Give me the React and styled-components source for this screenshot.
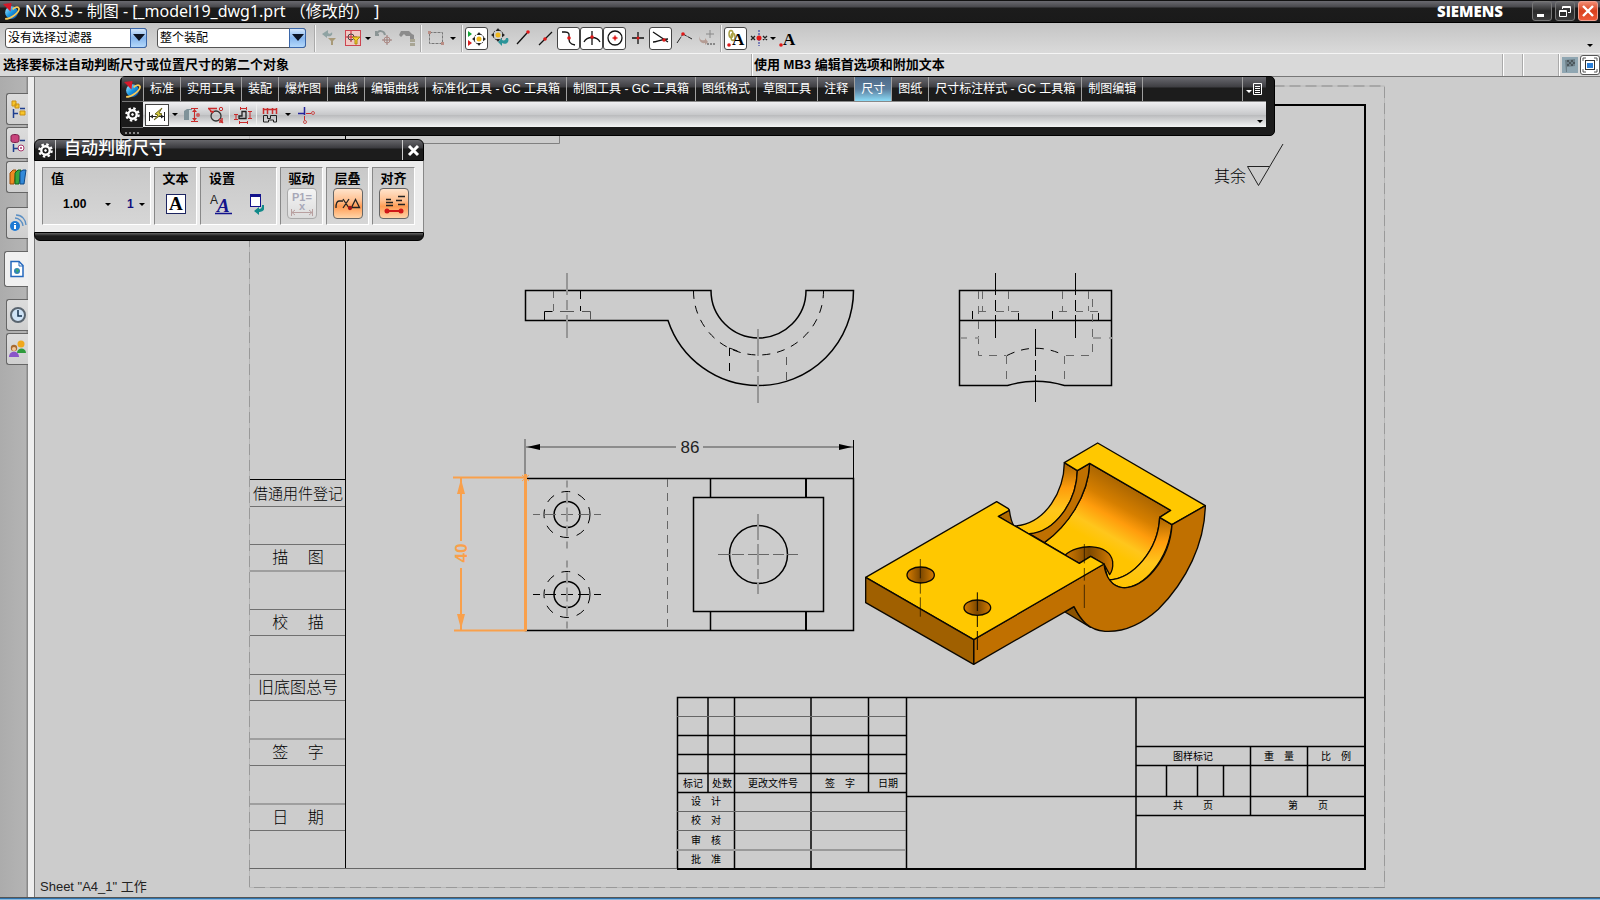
import styled, { createGlobalStyle } from 'styled-components';

const tabs = [
  '标准',
  '实用工具',
  '装配',
  '爆炸图',
  '曲线',
  '编辑曲线',
  '标准化工具 - GC 工具箱',
  '制图工具 - GC 工具箱',
  '图纸格式',
  '草图工具',
  '注释',
  '尺寸',
  '图纸',
  '尺寸标注样式 - GC 工具箱',
  '制图编辑',
];

export default function App() {
  return (
    <Window>
      <GlobalStyle />
      <TitleBar>
        <NxLogo size={17} />
        <WindowTitle>NX 8.5 - 制图 - [_model19_dwg1.prt （修改的） ]</WindowTitle>
        <Brand>SIEMENS</Brand>
        <WindowButtons>
          <WindowButton aria-label="最小化">
            <svg width="16" height="16">
              <rect x="3" y="11" width="7" height="3" fill="#fff" />
            </svg>
          </WindowButton>
          <WindowButton aria-label="还原">
            <svg width="16" height="16" fill="none" stroke="#fff">
              <path d="M5.500 6V3.500h8v6H11M5.500 4.500h8" />
              <path d="M2.500 7.500h7v6h-7zM2.500 8.500h7" />
            </svg>
          </WindowButton>
          <WindowButton $danger aria-label="关闭">
            <svg width="16" height="16" stroke="#fff" strokeWidth="2.400">
              <path d="M3 3l10 10M13 3L3 13" />
            </svg>
          </WindowButton>
        </WindowButtons>
      </TitleBar>
      <SelectionBar />
      <StatusRow>
        <Prompt>选择要标注自动判断尺寸或位置尺寸的第二个对象</Prompt>
        <Hint>使用 MB3 编辑首选项和附加文本</Hint>
        <StatusCell $width={20} />
        <StatusCell $width={36} />
        <StatusCell $width={42}>
          <FlagButton aria-label="完成草图">
            <svg width="16" height="16">
              <path d="M3 3l10-1v7l-8 1v5H4z" fill="#6d7f88" />
              <path
                d="M5 3h2v2H5zM9 3h2v2H9zM7 5h2v2H7zM11 5h2v2h-2zM5 7h2v2H5zM9 7h2v2H9z"
                fill="#4b565c"
              />
            </svg>
          </FlagButton>
          <FullScreenButton aria-label="全屏">
            <svg width="18" height="18">
              <path
                d="M2 5V2h3M13 2h3v3M16 13v3h-3M5 16H2v-3"
                fill="none"
                stroke="#555"
              />
              <rect x="4.500" y="4.500" width="9" height="9" fill="#fff" stroke="#333" />
              <rect x="6" y="7" width="6" height="5" fill="#2a7fd8" />
            </svg>
          </FullScreenButton>
        </StatusCell>
      </StatusRow>
      <Main>
        <ResourceBar />
        <Canvas>
          <Sheet />
          <RibbonPanel />
          <DimensionDialog />
        </Canvas>
      </Main>
      <TaskbarEdge />
    </Window>
  );
}

function SelectionBar() {
  return (
    <Toolbar>
      <Combo label="选择过滤器" value="没有选择过滤器" width={142} />
      <Combo label="选择范围" value="整个装配" width={149} />
      <Separator $first />
      <ToolButton aria-label="重置过滤器">
        <svg viewBox="0 0 20 20">
          <path d="M8 2L2 6l5 4V8c4 1 6-1 5-4-1 2-3 2-4 1z" fill="#8fa3a3" />
          <path d="M8 10h8l-3 3v4h-2v-4z" fill="#a89a78" />
        </svg>
      </ToolButton>
      <ToolButton aria-label="过滤器">
        <svg viewBox="0 0 20 20">
          <rect x="2.500" y="2.500" width="15" height="15" fill="#f0c9c4" stroke="#cc4450" />
          <path d="M8 3v11M3 9h11" stroke="#d02030" />
          <circle cx="8" cy="9" r="3" fill="none" stroke="#444" />
          <path d="M9 9h8l-3 3v4h-2v-4z" fill="#f6d327" stroke="#a98a10" />
        </svg>
      </ToolButton>
      <Caret $width={8} />
      <ToolButton aria-label="重置方位">
        <svg viewBox="0 0 20 20" fill="none">
          <path d="M3 6c1-4 7-4 8 1M2 3v4h3" stroke="#8b9595" strokeWidth="2" />
          <circle cx="13" cy="12" r="3" stroke="#b08a84" />
          <path d="M13 7v10M8 12h10" stroke="#9c7c78" />
        </svg>
      </ToolButton>
      <ToolButton aria-label="放大镜">
        <svg viewBox="0 0 20 20">
          <path d="M2 7l2-4h8l3 3 2 1v4h-4V8H9L7 6 4 9z" fill="#8c8c8c" />
          <path d="M13 11h5v3h-5zM13 15h5v3h-5z" fill="#a8a594" />
        </svg>
      </ToolButton>
      <Separator />
      <ToolButton aria-label="矩形选择">
        <svg viewBox="0 0 20 20">
          <rect
            x="3.500"
            y="4.500"
            width="13"
            height="11"
            fill="none"
            stroke="#777"
            strokeDasharray="3 1"
          />
          <path d="M2 3h3v3H2zM15 14h3v3h-3z" fill="#b98d84" />
        </svg>
      </ToolButton>
      <Caret $width={12} />
      <Separator />
      <ToolButton $pressed aria-label="启用捕捉点">
        <svg viewBox="0 0 20 20">
          <path d="M1 3l4 3-4 3z" fill="#18a53a" />
          <path d="M1 12l4 3-4 3z" fill="#d92020" />
          <Compass cx={12} cy={11} />
        </svg>
      </ToolButton>
      <ToolButton aria-label="清除捕捉点">
        <svg viewBox="0 0 20 20">
          <Compass cx={8} cy={7} />
          <path d="M18 10c2 5-3 7-6 5v3l-4-4 4-4v2c2 1 4 0 4-2z" fill="#2b9499" />
        </svg>
      </ToolButton>
      <ToolButton aria-label="端点">
        <svg viewBox="0 0 20 20">
          <path d="M4 16L14 5" stroke="#111" strokeWidth="1.300" />
          <circle cx="15" cy="4" r="1.800" fill="#e01818" />
        </svg>
      </ToolButton>
      <ToolButton aria-label="中点">
        <svg viewBox="0 0 20 20">
          <path d="M3 17L16 4" stroke="#111" strokeWidth="1.300" />
          <circle cx="9" cy="11" r="1.800" fill="#e01818" />
        </svg>
      </ToolButton>
      <ToolButton $pressed aria-label="控制点">
        <svg viewBox="0 0 20 20">
          <path
            d="M3 4h3c5 0 4 3 4 6s0 6 6 7"
            fill="none"
            stroke="#111"
            strokeWidth="1.300"
          />
          <circle cx="10" cy="10" r="1.800" fill="#e01818" />
        </svg>
      </ToolButton>
      <ToolButton $pressed aria-label="交点">
        <svg viewBox="0 0 20 20">
          <path
            d="M10 3v14M2 14c3-6 13-6 16 0"
            fill="none"
            stroke="#111"
            strokeWidth="1.300"
          />
          <circle cx="10" cy="9" r="1.800" fill="#e01818" />
        </svg>
      </ToolButton>
      <ToolButton $pressed aria-label="圆弧中心">
        <svg viewBox="0 0 20 20">
          <circle cx="10" cy="10" r="7" fill="none" stroke="#111" strokeWidth="1.300" />
          <path d="M10 7v6M7 10h6" stroke="#e06060" />
          <circle cx="10" cy="10" r="1.800" fill="#e01818" />
        </svg>
      </ToolButton>
      <ToolButton aria-label="现有点">
        <svg viewBox="0 0 20 20">
          <path d="M10 4v12M4 10h12" stroke="#111" strokeWidth="1.300" />
          <circle cx="10" cy="10" r="1.500" fill="#e01818" />
        </svg>
      </ToolButton>
      <ToolButton $pressed aria-label="相切点">
        <svg viewBox="0 0 20 20">
          <path
            d="M2 4l15 10M2 14c4 0 8-3 15-3"
            fill="none"
            stroke="#111"
            strokeWidth="1.300"
          />
          <circle cx="13" cy="12" r="1.800" fill="#e01818" />
        </svg>
      </ToolButton>
      <ToolButton aria-label="象限点">
        <svg viewBox="0 0 20 20">
          <path d="M3 15L9 6l9 5" fill="none" stroke="#222" strokeDasharray="7 1" />
          <circle cx="9" cy="6" r="1.800" fill="#e01818" />
        </svg>
      </ToolButton>
      <ToolButton aria-label="点构造器">
        <svg viewBox="0 0 20 20">
          <path d="M13 2v8M9 6h8" stroke="#888" />
          <path d="M3 8c-1 4 2 5 5 4v-2l3 4-3 3v-2c-4 1-7-3-5-7z" fill="#b49c94" />
          <path d="M10 16h8" stroke="#888" strokeWidth="2" strokeDasharray="2 1" />
        </svg>
      </ToolButton>
      <Separator />
      <ToolButton $pressed aria-label="原点自动对齐">
        <svg viewBox="0 0 20 20">
          <ellipse cx="5" cy="6" rx="2" ry="3.500" fill="none" stroke="#a9a044" strokeWidth="1.500" />
          <ellipse cx="7" cy="9" rx="2" ry="3.500" fill="none" stroke="#a9a044" strokeWidth="1.500" />
          <SerifLetter x="6" y="17">A</SerifLetter>
          <circle cx="3" cy="17" r="1.800" fill="#e01818" />
        </svg>
      </ToolButton>
      <ToolButton aria-label="对齐点">
        <svg viewBox="0 0 20 20">
          <path d="M10 2v16" stroke="#1c2a9c" strokeDasharray="2 1" />
          <path
            d="M2 8l4 4M6 8l-4 4M14 8l4 4M18 8l-4 4"
            stroke="#222"
            strokeWidth="1.300"
          />
          <circle cx="10" cy="10" r="2.500" fill="#e01818" />
        </svg>
      </ToolButton>
      <Caret $width={6} />
      <ToolButton aria-label="注释">
        <svg viewBox="0 0 20 20">
          <SerifLetter x="5" y="17">A</SerifLetter>
          <circle cx="3" cy="17" r="1.800" fill="#e01818" />
        </svg>
      </ToolButton>
      <OverflowCaret />
    </Toolbar>
  );
}

function Combo({ label, value, width }) {
  return (
    <ComboBox $width={width}>
      <ComboSelect aria-label={label} defaultValue={value}>
        <option>{value}</option>
      </ComboSelect>
      <ComboArrow>
        <svg width="12" height="8">
          <path d="M0 0h12L6 7z" fill="#0c1424" />
        </svg>
      </ComboArrow>
    </ComboBox>
  );
}

function Compass({ cx, cy }) {
  return (
    <g transform={`translate(${cx} ${cy})`}>
      <circle r="5" fill="none" stroke="#333" strokeDasharray="2 1" />
      <path d="M0-7l2 3h-4zM0 7l2-3h-4zM-7 0l3 2v-4zM7 0l-3 2v-4z" fill="#222" />
      <circle r="2.500" fill="#f0b81c" />
    </g>
  );
}

function NxLogo({ size }) {
  return (
    <svg width={size} height={size} viewBox="0 0 16 16" aria-label="NX">
      <defs>
        <linearGradient id="globe" x1="0" y1="0" x2="1" y2="1">
          <stop offset="0" stopColor="#b9f0ff" />
          <stop offset="0.5" stopColor="#1795e0" />
          <stop offset="1" stopColor="#0a3d9c" />
        </linearGradient>
      </defs>
      <circle cx="8" cy="9" r="6" fill="url(#globe)" />
      <path d="M0 1l8-1-1 8z" fill="#d6182a" />
      <path
        d="M2 15c5 0 14-6 13-10-1-2-4-1-6 1"
        fill="none"
        stroke="#f5c95a"
        strokeWidth="1.600"
      />
    </svg>
  );
}

function Gear() {
  return (
    <svg width="15" height="15" viewBox="0 0 16 16" fill="none" stroke="#fff">
      <circle cx="8" cy="8" r="6.500" strokeWidth="2.500" strokeDasharray="2.600 2.500" />
      <circle cx="8" cy="8" r="4.500" strokeWidth="2.500" />
      <circle cx="8" cy="8" r="1" fill="#fff" />
    </svg>
  );
}

function ResourceBar() {
  return (
    <Rail>
      <RailTab aria-label="装配导航器">
        <svg width="18" height="20" viewBox="0 0 18 20">
          <path
            d="M3 2h4v5H3zM6 5h4v4H6zM11 12h5v4h-5z"
            fill="#f8c62a"
            stroke="#c88f14"
          />
          <path d="M4.500 10v9M4 14.500h5M11 9.500h5" stroke="#1f3f8f" strokeWidth="1.500" />
        </svg>
      </RailTab>
      <RailTab aria-label="部件导航器">
        <svg width="18" height="20" viewBox="0 0 18 20">
          <path d="M2 3c0-2 8-2 8 0v5c0 2-8 2-8 0z" fill="#c8447c" stroke="#7a1e48" />
          <path d="M4.500 11v8M4 15.500h5M11 7.500h5" stroke="#1f3f8f" strokeWidth="1.500" />
          <circle cx="12" cy="15" r="3" fill="#fff" stroke="#a8386c" />
          <circle cx="12" cy="15" r="1" fill="#a8386c" />
        </svg>
      </RailTab>
      <RailTab aria-label="重用库">
        <svg width="18" height="18" viewBox="0 0 18 18">
          <path d="M1 5l3-3h3L5 16H1z" fill="#ee8a22" stroke="#9b4d08" />
          <path d="M6 5l3-3h3l-2 14H6z" fill="#36a63f" stroke="#14641b" />
          <path d="M11 4l3-2h3l-2 14h-4z" fill="#3289d8" stroke="#114a86" />
        </svg>
      </RailTab>
      <RailTab $gap={12} aria-label="HD3D 工具">
        <svg width="18" height="18" viewBox="0 0 18 18">
          <circle cx="6" cy="12" r="5" fill="#1f7ad4" />
          <path d="M6 9v1M6 11v4" stroke="#fff" strokeWidth="2" />
          <path
            d="M6 4c4 0 8 4 8 8M7 1c6 0 10 5 10 10"
            fill="none"
            stroke="#5a8fc4"
            strokeWidth="1.300"
          />
        </svg>
      </RailTab>
      <RailTab $gap={10} $active aria-label="Web 浏览器">
        <svg width="16" height="18" viewBox="0 0 16 18">
          <path d="M2 1.500h8l4 4v11H2z" fill="#fff" stroke="#2468bd" strokeWidth="1.500" />
          <path d="M10 1v5h4" fill="none" stroke="#2468bd" />
          <circle cx="8" cy="11" r="3" fill="#3183b8" />
          <path d="M7 9l3 1-2 3z" fill="#3db05a" />
        </svg>
      </RailTab>
      <RailTab $gap={10} aria-label="历史记录">
        <svg width="18" height="18" viewBox="0 0 18 18">
          <circle cx="9" cy="9" r="7" fill="#cfe3f6" stroke="#59646f" strokeWidth="2" />
          <path d="M9 4v6h4" fill="none" stroke="#14304c" strokeWidth="1.500" />
        </svg>
      </RailTab>
      <RailTab aria-label="角色">
        <svg width="18" height="18" viewBox="0 0 18 18">
          <circle cx="12" cy="4" r="3.500" fill="#f0a81c" />
          <path d="M8 13c0-6 9-6 9 0z" fill="#2f9b3c" />
          <circle cx="5" cy="8" r="3.200" fill="#a86a30" />
          <circle cx="5" cy="9" r="2" fill="#f2c79a" />
          <path d="M0 17c0-7 10-7 10 0z" fill="#8a55c9" />
        </svg>
      </RailTab>
    </Rail>
  );
}

function RibbonPanel() {
  return (
    <Ribbon>
      <RibbonSide>
        <RibbonLogo>
          <NxLogo size={17} />
        </RibbonLogo>
        <RibbonGear aria-label="工具条选项">
          <Gear />
        </RibbonGear>
        <Grip />
      </RibbonSide>
      <RibbonBody>
        <TabRow>
          {tabs.map(tab => (
            <Tab key={tab} type="button" $active={tab === '尺寸'}>
              {tab}
            </Tab>
          ))}
          <TabFill />
          <MenuButton aria-label="菜单">
            <svg width="17" height="14" fill="none" stroke="#fff">
              <path d="M0 8h6L3 11z" fill="#fff" stroke="none" />
              <path d="M7.500 1.500h8v11h-8zM9 4.500h5M9 6.500h5M9 8.500h5M9 10.500h5" />
            </svg>
          </MenuButton>
        </TabRow>
        <CommandRow>
          <CommandButton $pressed aria-label="自动判断尺寸">
            <svg width="18" height="18" viewBox="0 0 18 18">
              <path d="M1.500 6v9M16.500 6v9M2 10.500h14" stroke="#222" />
              <path d="M2 10.500l3-2v4zM16 10.500l-3-2v4z" fill="#222" />
              <path d="M14 2L7 8l3 1-4 5 8-6-3-1z" fill="#d9cf3a" stroke="#6b6620" />
            </svg>
          </CommandButton>
          <Caret $width={11} />
          <CommandButton aria-label="圆柱尺寸">
            <svg width="18" height="18" viewBox="0 0 18 18">
              <path d="M1 5l3-2h5v11H1z" fill="#7f9299" />
              <path d="M6 4h4v10H6z" fill="#c8d3d6" />
              <path d="M8 2.500h7M8 15.500h7M11.500 3v12" stroke="#c92b2b" />
              <path d="M9 6l2.500-3L14 6zM9 12l2.500 3 2.500-3z" fill="#c92b2b" />
              <circle cx="15" cy="9" r="2" fill="#c95b5b" />
            </svg>
          </CommandButton>
          <CommandButton aria-label="直径尺寸">
            <svg width="18" height="18" viewBox="0 0 18 18" fill="none">
              <circle cx="9" cy="10" r="5" stroke="#333" strokeWidth="1.300" />
              <path d="M1 2.500h9M2 3l4 4M3 5.500h4M12 13l4 4" stroke="#c92b2b" strokeWidth="1.300" />
              <circle cx="14" cy="3" r="1.700" stroke="#c92b2b" />
              <path d="M15 12v4h-3" stroke="#c92b2b" strokeWidth="1.500" />
            </svg>
          </CommandButton>
          <CommandSeparator />
          <CommandButton aria-label="特征尺寸">
            <svg width="18" height="18" viewBox="0 0 18 18" fill="none">
              <path d="M5 12.500V10h3V5.500h4v7z" stroke="#222" strokeWidth="1.300" />
              <path
                d="M6.500 1v3M12.500 1v3M6 2.500h6M5.500 15v3M13.500 15v3M5 16.500h8M0 8.500h4M0 13.500h4M2 8v5M14 5.500h4M14 12.500h4M16 6v6"
                stroke="#c92b2b"
              />
            </svg>
          </CommandButton>
          <CommandSeparator />
          <CommandButton aria-label="水平链尺寸">
            <svg width="18" height="18" viewBox="0 0 18 18" fill="none">
              <path d="M2.500 16V9.500h4v3h3v-3h6V16h-3v-2h-5v2z" stroke="#222" />
              <path
                d="M2.500 2v6M6.500 2v6M11.500 2v6M15.500 2v6M2 3.500h14"
                stroke="#c92b2b"
                strokeWidth="1.500"
              />
            </svg>
          </CommandButton>
          <Caret $width={12} />
          <CommandButton aria-label="坐标尺寸">
            <svg width="18" height="18" viewBox="0 0 18 18" fill="none">
              <path d="M7.500 1v8M1 7.500h7" stroke="#24249c" strokeWidth="1.500" />
              <path d="M9 7.500h5M7.500 10v4" stroke="#c92b2b" />
              <circle cx="16" cy="7" r="1.500" stroke="#c95050" />
              <circle cx="8" cy="16" r="1.500" stroke="#c95050" />
            </svg>
          </CommandButton>
          <OverflowCaret />
        </CommandRow>
      </RibbonBody>
    </Ribbon>
  );
}

function DimensionDialog() {
  return (
    <Dialog>
      <DialogTitle>
        <DialogGear aria-label="对话框选项">
          <Gear />
        </DialogGear>
        <DialogName>自动判断尺寸</DialogName>
        <DialogClose aria-label="关闭">
          <svg width="13" height="13" stroke="#fff" strokeWidth="3">
            <path d="M2 2l9 9M11 2l-9 9" />
          </svg>
        </DialogClose>
      </DialogTitle>
      <DialogBody>
        <Group $width={109} $left>
          <GroupLabel>值</GroupLabel>
          <GroupRow>
            <ValueButton $width={62}>
              1.00
              <Caret $width={6} />
            </ValueButton>
            <ValueButton $width={18} $blue>
              1
              <Caret $width={6} />
            </ValueButton>
          </GroupRow>
        </Group>
        <Group $width={43}>
          <GroupLabel>文本</GroupLabel>
          <PlainButton aria-label="注释编辑器">
            <svg width="22" height="22">
              <rect x="1.500" y="1.500" width="19" height="19" fill="#fff" stroke="#1d2560" />
              <BigLetter x="4" y="17">A</BigLetter>
            </svg>
          </PlainButton>
        </Group>
        <Group $width={77} $left>
          <GroupLabel>设置</GroupLabel>
          <GroupRow $gap={14}>
            <PlainButton aria-label="尺寸样式">
              <svg width="24" height="24">
                <SmallLetter x="1" y="12">A</SmallLetter>
                <ItalicLetter x="8" y="20">A</ItalicLetter>
                <path d="M6 21.500h17" stroke="#13138c" strokeWidth="1.500" />
              </svg>
            </PlainButton>
            <PlainButton aria-label="重置">
              <svg width="20" height="24">
                <rect x="3.500" y="2.500" width="10" height="12" fill="#fff" stroke="#13138c" />
                <path d="M3 3.500h11" stroke="#13138c" strokeWidth="3" />
                <path d="M17 13v4c0 2-3 3-5 3v3l-5-4 5-4v2c2 0 3-1 3-4z" fill="#118a8a" />
              </svg>
            </PlainButton>
          </GroupRow>
        </Group>
        <Group $width={43}>
          <GroupLabel>驱动</GroupLabel>
          <ToggleButton disabled aria-label="驱动">
            <svg width="26" height="26">
              <FormulaText x="3" y="10">P1=</FormulaText>
              <FormulaText x="10" y="19">x</FormulaText>
              <path
                d="M2.500 18v7M23.500 18v7M3 21.500h20M6 19l-3 2.500L6 24M20 19l3 2.500-3 2.500"
                fill="none"
                stroke="#b8a0a0"
              />
            </svg>
          </ToggleButton>
        </Group>
        <Group $width={43}>
          <GroupLabel>层叠</GroupLabel>
          <ToggleButton $on aria-label="层叠">
            <svg width="26" height="26" fill="none" stroke="#222" strokeWidth="1.300">
              <path d="M1 17c0-4 1-7 3-7h4M8 8l6 9M14 8l-6 9M16.500 16.500l4-8 4 8z" />
              <circle cx="15" cy="17" r="1.500" fill="#a01818" stroke="#a01818" />
            </svg>
          </ToggleButton>
        </Group>
        <Group $width={43}>
          <GroupLabel>对齐</GroupLabel>
          <ToggleButton $on aria-label="对齐">
            <svg width="26" height="26" stroke="#222">
              <path
                d="M5 8.500h5M5 11.500h7M5 14.500h7M17 5.500h7M15 9.500h6M17 13.500h7"
                strokeWidth="1.300"
              />
              <path d="M6 20h14" stroke="#d01818" strokeWidth="2" />
              <circle cx="6" cy="20" r="2.500" fill="#d01818" stroke="none" />
              <circle cx="20" cy="20" r="2.500" fill="#d01818" stroke="none" />
            </svg>
          </ToggleButton>
        </Group>
      </DialogBody>
      <DialogFoot />
    </Dialog>
  );
}

function Sheet() {
  return (
    <Drawing viewBox="35 77 1565 820">
      <SheetFrame />
      <FrontView />
      <SideView />
      <PlanView />
      <Model />
      <TitleBlock />
      <SheetStatus x="40" y="891">Sheet "A4_1" 工作</SheetStatus>
    </Drawing>
  );
}

const marginLabels = [
  { text: '描\u3000 图', y: 563 },
  { text: '校\u3000 描', y: 628 },
  { text: '旧底图总号', y: 693 },
  { text: '签\u3000 字', y: 758 },
  { text: '日\u3000 期', y: 823 },
];

function SheetFrame() {
  return (
    <g fill="none">
      <path
        d="M249.500 86H1384.500V887.500H249.500z"
        stroke="#808080"
        strokeDasharray="11 5"
      />
      <path d="M249.500 86H1384.500V887.500H249.500z" stroke="#aaa" strokeOpacity="0.600" />
      <path d="M345 105H1365V869" stroke="#000" strokeWidth="2" />
      <path d="M345.500 105V868.500" stroke="#000" />
      <path d="M249.500 868.500H677" stroke="#666" />
      <path d="M345 143.500H559.500V130" stroke="#808080" />
      <path d="M250 479.500H345" stroke="#000" />
      <path
        d="M250 506.500h95M250 544.500h95M250 571h95M250 609.500h95M250 635.500h95M250 674.500h95M250 700.500h95M250 739h95M250 765.500h95M250 804h95M250 830.500h95"
        stroke="#707070"
      />
      <MarginText x="298" y="499" $small>借通用件登记</MarginText>
      {marginLabels.map(label => (
        <MarginText key={label.text} x="298" y={label.y}>
          {label.text}
        </MarginText>
      ))}
      <MarginText x="1230" y="182">其余</MarginText>
      <path d="M1258.500 185.500L1247.500 166.500H1269.500M1258.500 185.500L1283 144" stroke="#222" />
    </g>
  );
}

function FrontView() {
  return (
    <g fill="none" stroke="#000">
      <path
        d="M525.500 290.500H711A47.500 47.500 0 0 0 806 290.500H853.500A95 95 0 0 1 758.500 385.500A95 95 0 0 1 668 320.500H525.500Z"
        strokeWidth="1.500"
      />
      <path d="M693.500 291A65 64 0 0 0 823.500 291" strokeDasharray="8 7" />
      <path d="M553.500 291v20" stroke="#666" strokeDasharray="7 6" />
      <path d="M580.500 291v20M729.500 348v25" strokeDasharray="8 7" />
      <path d="M544.500 320v-8.500h8M729.500 348l8 3" />
      <path d="M560 311.500h14M582 311.500h8.500v8" stroke="#555" />
      <path d="M786.500 357v24" stroke="#555" strokeDasharray="8 7" />
      <path
        d="M567 273v22M567 300v10M567 315v23M758 329v27M758 360v12M758 376v27"
        stroke="#969696"
        strokeWidth="2"
      />
    </g>
  );
}

function SideView() {
  return (
    <g fill="none" stroke="#000">
      <path
        d="M959.500 290.500H1111.500V385.500H1064.500Q1035.500 377 1007.500 385.500H959.500ZM959.500 320.500H1111.500"
        strokeWidth="1.500"
      />
      <path
        d="M978.500 291v64.500h28M1006.500 356v24M982.500 291v20M1008.500 291v20M978 311.500h9M996 311.500h8M1011 311.500h8M1062.500 291v20M1088.500 291v20M1092.500 299v56.500h-28M1064.500 356v26M1059 311.500h8M1076 311.500h7M1090 311.500h9"
        stroke="#666"
        strokeDasharray="8 7"
      />
      <path d="M1007 355.500Q1035.500 341 1064.500 355.500" strokeDasharray="8 7" />
      <path d="M972.500 311v8M1018.500 313v8M1052.500 311v8M1098.500 313v8" />
      <path d="M960 338h7M975 338h4M1093 338h8M1109 338h3" stroke="#999" strokeWidth="2" />
      <path d="M995.500 273v22M995.500 300v11M995.500 315v23M1075.500 273v22M1075.500 300v11M1075.500 315v23M1035.500 329v27M1035.500 360v11M1035.500 375v27" />
    </g>
  );
}

function SmallHole({ cy, dark }) {
  return (
    <g>
      <circle cx="567" cy={cy} r="13" strokeWidth="1.500" />
      <circle cx="567" cy={cy} r="23" strokeDasharray="9 8" />
      <path
        d={`M533 ${cy}h7M545 ${cy}h11M561 ${cy}h12M578 ${cy}h11M594 ${cy}h7`}
        stroke={dark ? '#000' : '#666'}
      />
      <path
        d={`M567 ${cy - 34}v7M567 ${cy - 22}v11M567 ${cy - 7}v14M567 ${cy + 11}v11M567 ${cy + 27}v7`}
        stroke="#969696"
        strokeWidth="2"
      />
    </g>
  );
}

function PlanView() {
  return (
    <g fill="none" stroke="#000">
      <path d="M525.500 478.500H853.500V630.500H525.500Z" strokeWidth="1.500" />
      <path d="M693.500 497.500H823.500V611.500H693.500Z" strokeWidth="1.500" />
      <path d="M710.500 478v19M710.500 611v19" strokeWidth="1.500" />
      <path d="M806 478v19M806 611v19" strokeWidth="2" />
      <path d="M667.500 479V630" stroke="#666" strokeDasharray="8 6" />
      <circle cx="758.500" cy="554.500" r="29" strokeWidth="1.500" />
      <path
        d="M718 554.500h12M732 554.500h12M748 554.500h21M773 554.500h11M787 554.500h11"
        stroke="#666"
      />
      <path
        d="M758 514v26M758 544v21M758 569v10M758 582v12"
        stroke="#969696"
        strokeWidth="2"
      />
      <SmallHole cy={514.5} />
      <SmallHole cy={594.5} dark />

      <path d="M525 439v39" stroke="#8c8c8c" strokeWidth="2" />
      <path d="M853.500 440v38" />
      <path d="M526 447H676M703 447H853" stroke="#777" strokeWidth="1.500" />
      <path d="M527 447l13-3v6zM852 447l-13-3v6z" fill="#000" stroke="none" />
      <DimensionText x="690" y="453">86</DimensionText>

      <g stroke="#f9a04b" strokeWidth="2">
        <path d="M453 477.500H526M454 630.500H526M461 478v63M461 568v62" />
        <path d="M525.500 474V631" strokeWidth="3" />
        <path d="M522 475l7 6M529 475l-7 6" strokeWidth="1" />
        <path d="M461 479l4 15h-8zM461 629l4-15h-8z" fill="#f9a04b" stroke="none" />
        <DimensionText $active transform="translate(467 553) rotate(-90)">
          40
        </DimensionText>
      </g>
    </g>
  );
}

// Isometric view of the clamp, drawn on its own grid at three units per pixel
function Model() {
  return (
    <g
      transform="translate(850 430) scale(0.33333)"
      stroke="#0c0800"
      strokeWidth="4"
      strokeLinejoin="round"
    >
      <defs>
        <linearGradient id="bore" gradientUnits="userSpaceOnUse" x1="840" y1="165" x2="740" y2="340">
          <stop offset="0" stopColor="#a86400" />
          <stop offset="0.35" stopColor="#d67f00" />
          <stop offset="0.55" stopColor="#ff9c0c" />
          <stop offset="0.8" stopColor="#ffc61c" />
          <stop offset="1" stopColor="#ffc400" />
        </linearGradient>
        <linearGradient id="rim" x1="0" y1="0" x2="0" y2="1">
          <stop offset="0" stopColor="#a86400" />
          <stop offset="0.35" stopColor="#ff9c0c" />
          <stop offset="0.65" stopColor="#ffc61c" />
          <stop offset="1" stopColor="#ffc400" />
        </linearGradient>
        <linearGradient id="hole" x1="0" y1="0" x2="1" y2="0">
          <stop offset="0" stopColor="#d67c00" />
          <stop offset="0.5" stopColor="#7c4800" />
          <stop offset="1" stopColor="#d67c00" />
        </linearGradient>
      </defs>
      <path d="M645 546L672 530C685 556 698 575 722 592Z" fill="#8a5200" />
      <path
        d="M719 100L962 241L929 262C925 360 850 448 775 450L762 402L688 400L583 338C650 290 715 200 719 100Z"
        fill="url(#bore)"
      />
      <path d="M643 98L682 122C680 215 615 308 538 313L496 288C590 280 642 180 643 98Z" fill="url(#rim)" />
      <path
        d="M682 122L719 100C715 200 650 290 583 338L538 311C615 306 680 215 682 122Z"
        fill="#c07000"
      />
      <path
        d="M645 376C680 340 780 338 788 395Q790 420 779 434L762 402L722 379L688 400Z"
        fill="url(#hole)"
      />
      <path
        d="M929 262L966 284C955 390 880 480 812 473Q788 466 777 450C850 446 925 360 929 262Z"
        fill="url(#rim)"
      />
      <path
        d="M643 98L743 39L1066 227L966 284L929 262L962 241L719 100L682 122Z"
        fill="#ffc800"
      />
      <path
        d="M371 629L762 402C766 440 785 470 818 473C880 478 960 390 966 284L1066 227C1064 340 1010 452 925 538C870 588 815 607 765 604C715 600 692 570 672 530L371 703Z"
        fill="#c07000"
      />
      <path d="M445 259L478 240C481 262 484 276 492 288Z" fill="#b06a00" />
      <path
        d="M47 442L440 215L475 236L478 241L445 259L688 400L722 379L762 402L371 629Z"
        fill="#ffc800"
      />
      <path d="M47 442L371 629V703L47 518Z" fill="#a06000" />
      <ellipse cx="212" cy="435" rx="41" ry="24" fill="url(#hole)" />
      <ellipse cx="382" cy="533" rx="40" ry="23" fill="url(#hole)" />
      <path
        d="M211 387v58M211 456v35M211 502v58M703 342v58M703 414v38M703 464v70"
        strokeWidth="2"
      />
      <path d="M382 487v56M382 556v35M382 603v57" strokeWidth="3" />
    </g>
  );
}

const blockLabels = [
  { text: '标记', x: 693, y: 787 },
  { text: '处数', x: 722, y: 787 },
  { text: '更改文件号', x: 773, y: 787 },
  { text: '签\u3000字', x: 840, y: 787 },
  { text: '日期', x: 888, y: 787 },
  { text: '设\u3000计', x: 706, y: 805 },
  { text: '校\u3000对', x: 706, y: 824 },
  { text: '审\u3000核', x: 706, y: 844 },
  { text: '批\u3000准', x: 706, y: 863 },
  { text: '图样标记', x: 1193, y: 760 },
  { text: '重\u3000量', x: 1279, y: 760 },
  { text: '比\u3000例', x: 1336, y: 760 },
  { text: '共\u3000\u3000页', x: 1193, y: 809 },
  { text: '第\u3000\u3000页', x: 1308, y: 809 },
];

function TitleBlock() {
  return (
    <g fill="none" stroke="#000">
      <path
        d="M677.500 868V697.500H1365M734.500 697V869M811 697V869M868.500 697V792M906.500 697V869M1136 697V869M708 697V792M1250.500 747V815M1307.500 747V796M1166.500 766V796M1197.500 766V796M1223.500 766V796M677 735.500H906M677 754.500H906M677 773.500H906M677 792.500H906M906 796.500H1365M1136 746.500H1365M1136 765.500H1365M1136 815.500H1365"
        strokeWidth="1.500"
      />
      <path d="M677 869H1366" strokeWidth="2" />
      <path d="M677 716.500H906M677 811.500H906M677 830.500H906" stroke="#666" />
      <path d="M677 850H906" stroke="#999" strokeWidth="2" />
      {blockLabels.map(label => (
        <BlockText key={`${label.text}${label.x}`} x={label.x} y={label.y}>
          {label.text}
        </BlockText>
      ))}
    </g>
  );
}

const GlobalStyle = createGlobalStyle`
  * {
    box-sizing: border-box;
  }
  body {
    margin: 0;
    background: #ccc;
    font-family: 'Liberation Sans', 'Noto Sans CJK SC', sans-serif;
  }
  button,
  select {
    font: inherit;
    color: inherit;
    padding: 0;
    border: 0;
    background: none;
  }
  svg {
    flex: none;
  }
`;

const Window = styled.div`
  display: flex;
  flex-direction: column;
  height: 100vh;
  overflow: hidden;
  font-size: 12px;
`;

const TitleBar = styled.header`
  display: flex;
  align-items: center;
  gap: 5px;
  height: 23px;
  flex: none;
  padding: 0 2px 1px 3px;
  color: #fff;
  border-top: 1px solid #111;
  border-bottom: 1px solid #000;
  background: linear-gradient(#6a6a70, #48484c 6px, #1c1c1c 7px, #1a1a1a);
`;

const WindowTitle = styled.h1`
  margin: 0;
  flex: 1;
  font: 16px/20px 'Noto Sans', 'Noto Sans CJK SC', sans-serif;
  white-space: nowrap;
`;

const Brand = styled.span`
  margin-right: 24px;
  font: 800 15px/20px 'Open Sans', 'Noto Sans', sans-serif;
`;

const WindowButtons = styled.div`
  display: flex;
  gap: 3px;
`;

const WindowButton = styled.button`
  display: grid;
  place-items: center;
  width: 20px;
  height: 20px;
  border: 1px solid ${props => (props.$danger ? '#f0a090' : '#777')};
  border-radius: 3px;
  background: ${props =>
    props.$danger
      ? 'linear-gradient(#f08a70, #d8401c 50%, #ee5a38)'
      : 'linear-gradient(#6c6c70, #2a2a2a 50%, #3c3c3c)'};
`;

const Toolbar = styled.div`
  display: flex;
  align-items: center;
  height: 31px;
  flex: none;
  padding: 0 4px 0 5px;
  border-bottom: 1px solid #f5f5f5;
  background: linear-gradient(#c4c4c4, #dadada);
`;

const ComboBox = styled.div`
  display: grid;
  width: ${props => props.$width}px;
  height: 20px;
  margin-right: 10px;
`;

const ComboSelect = styled.select`
  grid-area: 1 / 1;
  appearance: none;
  padding-left: 2px;
  line-height: 16px;
  color: #000;
  border: 1px solid #555;
  border-radius: 3px;
  background: #fff;
`;

const ComboArrow = styled.span`
  grid-area: 1 / 1;
  justify-self: end;
  display: grid;
  place-items: center;
  width: 17px;
  border: 1px solid #3a66a8;
  border-radius: 0 3px 3px 0;
  background: linear-gradient(#d4e6fa, #86b6ee 50%, #b4d8fa);
  pointer-events: none;
`;

const Separator = styled.span`
  width: 6px;
  height: 27px;
  margin-left: ${props => (props.$first ? -4 : 0)}px;
  background: linear-gradient(90deg, transparent 2px, #aaa 2px 3px, #f4f4f4 3px 4px, transparent 4px);
`;

const ToolButton = styled.button`
  display: grid;
  place-items: center;
  width: 23px;
  height: 23px;
  border: 1px solid ${props => (props.$pressed ? '#444' : 'transparent')};
  border-radius: 3px;
  background: ${props => (props.$pressed ? '#fff' : 'transparent')};

  svg {
    width: 20px;
    height: 20px;
  }
`;

const Caret = styled.span`
  width: ${props => props.$width}px;
  display: flex;
  justify-content: center;

  &::before {
    content: '';
    border: 3px solid transparent;
    border-top-color: #000;
    border-bottom: 0;
  }
`;

const OverflowCaret = styled.span`
  margin: 14px 3px 0 auto;
  border: 3px solid transparent;
  border-top-color: #000;
  border-bottom: 0;
`;

const StatusRow = styled.div`
  display: flex;
  height: 23px;
  flex: none;
  font-size: 13px;
  line-height: 21px;
  font-weight: bold;
  background: #d9d9d9;
  border-bottom: 1px solid #777;
`;

const Prompt = styled.div`
  flex: 751;
  padding-left: 3px;
`;

const Hint = styled.div`
  flex: 751;
  padding-left: 2px;
  border-left: 1px solid #aaa;
  box-shadow: inset 1px 0 #fff;
`;

const StatusCell = styled.div`
  display: flex;
  align-items: center;
  justify-content: flex-end;
  gap: 2px;
  width: ${props => props.$width}px;
  border-left: 1px solid #aaa;
  box-shadow: inset 1px 0 #fff;
`;

const FlagButton = styled.button`
  display: grid;
  background: #8fa6b2;
`;

const FullScreenButton = styled.button`
  display: grid;
  border: 1px solid #555;
  border-radius: 3px;
  background: #fff;
`;

const Main = styled.main`
  display: flex;
  flex: 1;
  min-height: 0;
`;

const Rail = styled.nav`
  display: flex;
  flex-direction: column;
  align-items: flex-end;
  gap: 2px;
  width: 34px;
  flex: none;
  padding-top: 16px;
  border-right: 6px solid #eee;
  background: linear-gradient(90deg, #acacac, #b4b4b4 26px, #888 27px);
`;

const RailTab = styled.button`
  display: grid;
  place-items: center;
  width: ${props => (props.$active ? 24 : 22)}px;
  height: ${props => (props.$active ? 36 : 32)}px;
  margin-top: ${props => props.$gap || 0}px;
  border: 1px solid #666;
  border-right: 0;
  border-radius: 3px 0 0 3px;
  background: ${props =>
    props.$active ? '#f0f0f0' : 'linear-gradient(#dcdcdc, #cfcfcf)'};
`;

const Canvas = styled.section`
  position: relative;
  flex: 1;
  border-left: 1px solid #777;
  background: #ccc;
`;

const Drawing = styled.svg`
  display: block;
  width: 100%;
  height: 100%;
`;

// The tool panels float above the sheet
const Ribbon = styled.div`
  position: absolute;
  top: -1px;
  left: 85px;
  right: 325px;
  display: flex;
  height: 60px;
  padding: 0 8px 8px 1px;
  color: #fff;
  border-radius: 5px;
  border: 1px solid #000;
  background: #1b1b1b;
`;

const RibbonSide = styled.div`
  width: 21px;
  flex: none;
  display: flex;
  flex-direction: column;
`;

const RibbonLogo = styled.span`
  display: grid;
  place-items: center;
  height: 25px;
  flex: none;
  border-bottom: 1px solid #777;
  background: linear-gradient(#5c5c60, #222 50%);
`;

const RibbonGear = styled.button`
  display: grid;
  place-items: center;
  height: 26px;
  flex: none;
  border-bottom: 1px solid #777;
`;

const Grip = styled.span`
  width: 16px;
  height: 2px;
  margin: 4px auto 0;
  flex: none;
  background: repeating-linear-gradient(90deg, #888 0 2px, transparent 2px 4px);
`;

const RibbonBody = styled.div`
  flex: 1;
  min-width: 0;
`;

const TabRow = styled.div`
  display: flex;
  height: 24px;
  background: linear-gradient(#6a6a70, #3e3e42 10px, #1c1c1c 11px);
`;

const Tab = styled.button`
  padding: 0 6px;
  line-height: 20px;
  white-space: nowrap;
  border-left: 1px solid #a0a0a0;
  background: ${props =>
    props.$active ? 'linear-gradient(#506a88, #5a7c9c 50%, #8cdcf8)' : 'none'};
`;

const TabFill = styled.span`
  flex: 1;
  border-left: 1px solid #a0a0a0;
`;

const MenuButton = styled.button`
  display: grid;
  place-items: center;
  width: 24px;
  border-left: 1px solid #a0a0a0;
`;

const CommandRow = styled.div`
  display: flex;
  align-items: center;
  height: 26px;
  padding-left: 2px;
  border-top: 1px solid #888;
  background: linear-gradient(#f0f0f2, #c8c9cb 50%, #b8b9bb 51%, #f4f5f5);
`;

const CommandButton = styled.button`
  display: grid;
  place-items: center;
  width: 24px;
  height: 22px;
  border: 1px solid ${props => (props.$pressed ? '#444' : 'transparent')};
  background: ${props => (props.$pressed ? '#fff' : 'transparent')};
`;

const CommandSeparator = styled.span`
  width: 1px;
  height: 24px;
  margin: 0 1px;
  background: #eee;
`;

const Dialog = styled.div`
  position: absolute;
  top: 62px;
  left: -1px;
  width: 390px;
`;

const DialogTitle = styled.div`
  display: flex;
  align-items: center;
  height: 22px;
  color: #fff;
  border: 1px solid #000;
  border-radius: 6px 6px 0 0;
  background: linear-gradient(#66666a, #3a3a3e 8px, #1c1c1c 9px);
`;

const DialogGear = styled.button`
  display: grid;
  place-items: center;
  width: 21px;
  height: 20px;
  border-right: 1px solid #ccc;
`;

const DialogName = styled.h2`
  flex: 1;
  margin: 0;
  padding: 0 0 2px 8px;
  font-size: 17px;
  line-height: 18px;
  font-weight: 500;
`;

const DialogClose = styled.button`
  display: grid;
  place-items: center;
  width: 21px;
  height: 20px;
  border-left: 1px solid #ccc;
`;

const DialogBody = styled.div`
  display: flex;
  gap: 3px;
  padding: 6px 7px 7px;
  border: 1px solid #888;
  border-width: 0 1px;
  background: #ececec;
`;

const DialogFoot = styled.div`
  height: 9px;
  border: 1px solid #000;
  border-radius: 0 0 6px 6px;
  background: linear-gradient(#666, #1b1b1b 3px);
`;

const Group = styled.div`
  display: flex;
  flex-direction: column;
  align-items: ${props => (props.$left ? 'flex-start' : 'center')};
  width: ${props => props.$width}px;
  height: 58px;
  padding: ${props => (props.$left ? '2px 0 0 8px' : '2px 0 0')};
  border: 1px solid #999;
  border-color: #888 #fff #fff #888;
  background: linear-gradient(#c9c9c9, #d6d6d6);
`;

const GroupLabel = styled.div`
  font-size: 13px;
  line-height: 18px;
  font-weight: bold;
`;

const GroupRow = styled.div`
  display: flex;
  align-items: center;
  gap: ${props => props.$gap || 0}px;
`;

const ValueButton = styled.button`
  display: flex;
  align-items: center;
  justify-content: space-between;
  width: ${props => props.$width}px;
  height: 32px;
  margin-left: ${props => (props.$blue ? 16 : -2)}px;
  padding-left: ${props => (props.$blue ? 0 : 14)}px;
  font-weight: bold;
  color: ${props => (props.$blue ? '#10107c' : '#000')};
`;

const PlainButton = styled.button`
  display: grid;
  place-items: center;
  height: 32px;
`;

const ToggleButton = styled.button`
  display: grid;
  place-items: center;
  width: 30px;
  height: 31px;
  border: 1px solid ${props => (props.$on ? '#666' : '#aaa')};
  border-radius: 4px;
  background: ${props =>
    props.$on
      ? 'linear-gradient(#ffe4cc, #ffc090 40%, #ff9c54 60%, #ffd4a8)'
      : 'linear-gradient(#f4f4f4, #dcdcdc)'};
`;

const TaskbarEdge = styled.footer`
  height: 3px;
  flex: none;
  background: linear-gradient(#555 1px, #2f73ac 1px 2px, #8cb8dc 2px);
`;

const SerifLetter = styled.text`
  font: bold 17px 'Liberation Serif', serif;
  fill: #000;
`;

const BigLetter = styled.text`
  font: bold 19px 'Liberation Serif', serif;
  fill: #000;
`;

const SmallLetter = styled.text`
  font: 12px 'Liberation Sans', sans-serif;
  fill: #222;
`;

const ItalicLetter = styled.text`
  font: italic bold 19px 'Liberation Serif', serif;
  fill: #13138c;
`;

const FormulaText = styled.text`
  font: bold 11px 'Liberation Sans', sans-serif;
  fill: #a8a8b8;
`;

const MarginText = styled.text`
  font: ${props => (props.$small ? 15 : 16)}px 'Noto Sans CJK SC', sans-serif;
  font-weight: 300;
  text-anchor: middle;
  white-space: pre;
  fill: #000;
  stroke: none;
`;

const BlockText = styled.text`
  font: 10px 'Noto Sans CJK SC', sans-serif;
  text-anchor: middle;
  white-space: pre;
  fill: #000;
  stroke: none;
`;

const DimensionText = styled.text`
  font: ${props => (props.$active ? 'bold' : 'normal')} 17px 'Liberation Sans', sans-serif;
  text-anchor: middle;
  fill: ${props => (props.$active ? '#f9a04b' : '#222')};
  stroke: none;
`;

const SheetStatus = styled.text`
  font: 13px 'Liberation Sans', 'Noto Sans CJK SC', sans-serif;
  fill: #222;
`;
